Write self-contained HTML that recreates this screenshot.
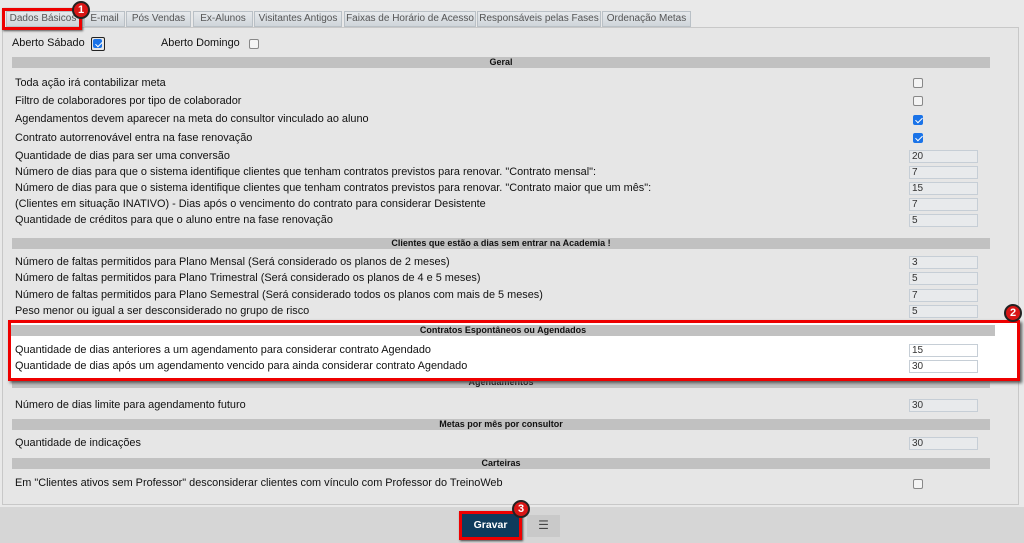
<!DOCTYPE html>
<html><head><meta charset="utf-8"><style>
*{box-sizing:border-box;margin:0;padding:0}
body{width:1024px;height:543px;background:#e9e9e9;font-family:"Liberation Sans",sans-serif;font-size:10.9px;color:#111;position:relative;overflow:hidden}
.a{position:absolute}
.tab{position:absolute;top:11px;height:16px;background:linear-gradient(#e6e9ec,#cfd5da);border:1px solid #b9c0c6;color:#555;font-size:10px;text-align:center;line-height:14px;white-space:nowrap;overflow:hidden}
.panel{position:absolute;left:2px;top:27px;width:1017px;height:478px;border:1px solid #c8c8c8;background:#e6e6e6}
.h{position:absolute;left:12px;width:978px;height:11px;background:#c1c1c1;font-weight:bold;font-size:9px;text-align:center;line-height:11px;color:#111}
.t{position:absolute;left:15px;white-space:nowrap;line-height:13px}
.in{position:absolute;left:909px;width:69px;height:13px;border:1px solid #c6ced6;background:#e8eaec;font-size:10px;line-height:11px;padding-left:2px;color:#333}
.cb{position:absolute;left:913px;width:10px;height:10px;border:1px solid #888;border-radius:2px;background:#f4f4f4}
.ck{background:#1a73e8;border-color:#1a73e8}
.ck:after{content:"";position:absolute;left:2.5px;top:0px;width:3px;height:6px;border:solid #fff;border-width:0 1.6px 1.6px 0;transform:rotate(45deg)}
.badge{position:absolute;width:18px;height:18px;border-radius:50%;background:#d91515;border:2px solid #222;color:#fff;font-weight:bold;font-size:11px;text-align:center;line-height:14px}
</style></head><body>
<div class="panel"></div>
<div class="tab" style="left:6px;width:74px">Dados Básicos</div>
<div class="a" style="left:2px;top:8px;width:80px;height:22px;border:3px solid #e00;box-shadow:1px 1px 2px #555"></div>
<div class="tab" style="left:84px;width:41px">E-mail</div>
<div class="tab" style="left:126px;width:65px">Pós Vendas</div>
<div class="tab" style="left:193px;width:60px">Ex-Alunos</div>
<div class="tab" style="left:254px;width:88px">Visitantes Antigos</div>
<div class="tab" style="left:344px;width:132px">Faixas de Horário de Acesso</div>
<div class="tab" style="left:477px;width:124px">Responsáveis pelas Fases</div>
<div class="tab" style="left:602px;width:89px">Ordenação Metas</div>
<div class="badge" style="left:72px;top:1px">1</div>

<div class="t" style="left:12px;top:37px">Aberto Sábado</div>
<div class="a" style="left:91px;top:37px;width:14px;height:14px;border:1.5px solid #222;border-radius:2px;padding:1px"><div class="cb ck" style="position:relative;left:0;top:0;width:9px;height:9px"></div></div>
<div class="t" style="left:161px;top:37px">Aberto Domingo</div>
<div class="cb" style="left:249px;top:39px"></div>

<div class="h" style="top:57px">Geral</div>
<div class="t" style="top:77px">Toda ação irá contabilizar meta</div><div class="cb" style="top:78px"></div>
<div class="t" style="top:95px">Filtro de colaboradores por tipo de colaborador</div><div class="cb" style="top:96px"></div>
<div class="t" style="top:113px">Agendamentos devem aparecer na meta do consultor vinculado ao aluno</div><div class="cb ck" style="top:115px"></div>
<div class="t" style="top:132px">Contrato autorrenovável entra na fase renovação</div><div class="cb ck" style="top:133px"></div>
<div class="t" style="top:150px">Quantidade de dias para ser uma conversão</div><div class="in" style="top:150px">20</div>
<div class="t" style="top:166px">Número de dias para que o sistema identifique clientes que tenham contratos previstos para renovar. "Contrato mensal":</div><div class="in" style="top:166px">7</div>
<div class="t" style="top:182px">Número de dias para que o sistema identifique clientes que tenham contratos previstos para renovar. "Contrato maior que um mês":</div><div class="in" style="top:182px">15</div>
<div class="t" style="top:198px">(Clientes em situação INATIVO) - Dias após o vencimento do contrato para considerar Desistente</div><div class="in" style="top:198px">7</div>
<div class="t" style="top:214px">Quantidade de créditos para que o aluno entre na fase renovação</div><div class="in" style="top:214px">5</div>

<div class="h" style="top:238px">Clientes que estão a dias sem entrar na Academia !</div>
<div class="t" style="top:256px">Número de faltas permitidos para Plano Mensal (Será considerado os planos de 2 meses)</div><div class="in" style="top:256px">3</div>
<div class="t" style="top:272px">Número de faltas permitidos para Plano Trimestral (Será considerado os planos de 4 e 5 meses)</div><div class="in" style="top:272px">5</div>
<div class="t" style="top:289px">Número de faltas permitidos para Plano Semestral (Será considerado todos os planos com mais de 5 meses)</div><div class="in" style="top:289px">7</div>
<div class="t" style="top:305px">Peso menor ou igual a ser desconsiderado no grupo de risco</div><div class="in" style="top:305px">5</div>

<div class="h" style="top:377px">Agendamentos</div>
<div class="a" style="left:8px;top:320px;width:1012px;height:61px;border:3px solid #e00;background:#fff;box-shadow:2px 2px 3px #555"></div>
<div class="h" style="top:325px;left:11px;width:984px">Contratos Espontâneos ou Agendados</div>
<div class="t" style="top:344px">Quantidade de dias anteriores a um agendamento para considerar contrato Agendado</div><div class="in" style="top:344px;background:#fff">15</div>
<div class="t" style="top:360px">Quantidade de dias após um agendamento vencido para ainda considerar contrato Agendado</div><div class="in" style="top:360px;background:#fff">30</div>
<div class="badge" style="left:1004px;top:304px">2</div>

<div class="t" style="top:399px">Número de dias limite para agendamento futuro</div><div class="in" style="top:399px">30</div>
<div class="h" style="top:419px">Metas por mês por consultor</div>
<div class="t" style="top:437px">Quantidade de indicações</div><div class="in" style="top:437px">30</div>
<div class="h" style="top:458px">Carteiras</div>
<div class="t" style="top:477px">Em "Clientes ativos sem Professor" desconsiderar clientes com vínculo com Professor do TreinoWeb</div><div class="cb" style="top:479px"></div>

<div class="a" style="left:0;top:507px;width:1024px;height:36px;background:#d6d6d6"></div>
<div class="a" style="left:459px;top:511px;width:63px;height:29px;border:3px solid #e00;background:#0f3b5c;color:#fff;font-weight:bold;font-size:10.5px;text-align:center;line-height:23px;box-shadow:1px 1px 2px #444">Gravar</div>
<div class="a" style="left:527px;top:515px;width:33px;height:22px;background:#c9c9c9;color:#444;font-size:12px;text-align:center;line-height:21px">☰</div>
<div class="badge" style="left:512px;top:500px">3</div>
</body></html>
